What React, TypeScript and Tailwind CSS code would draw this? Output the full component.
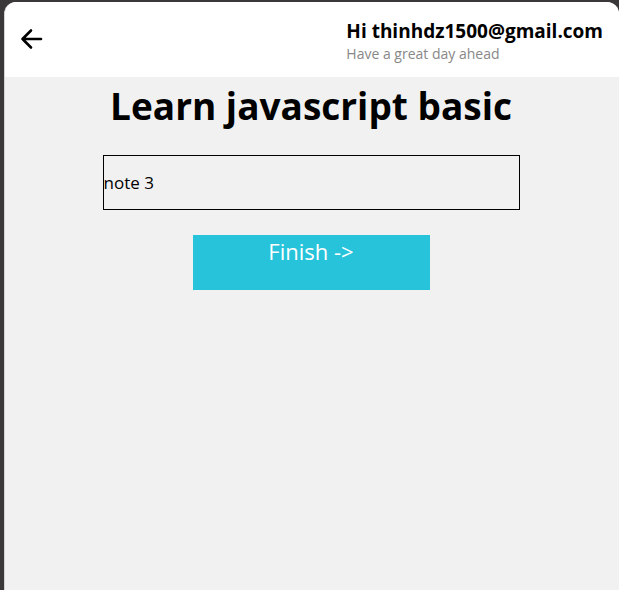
export default function App() {
  return (
    <div className="min-h-screen bg-[#3a3838] pt-0.5 pl-1 font-['Open_Sans','Noto_Sans',sans-serif] text-black">
      <div className="min-h-[588px] overflow-hidden rounded-t-xl border-l border-[#d4d4d4] bg-[#f1f1f1]">
        <header className="flex h-[75px] items-center justify-between bg-white pr-4 pl-3">
          <button type="button" aria-label="Back" className="flex h-8 items-center justify-center">
            <svg viewBox="0 0 30 30" className="size-[30px]" fill="none" stroke="currentColor" strokeWidth="2.6" strokeLinecap="round" strokeLinejoin="round">
              <path d="M24 14H5.500M14 5.500 5.500 14 14 22.500" />
            </svg>
          </button>
          <div className="pt-1">
            <p className="text-[19px] leading-6 font-bold">Hi thinhdz1500@gmail.com</p>
            <p className="text-sm leading-[22px] text-[#888]">Have a great day ahead</p>
          </div>
        </header>
        <main className="flex flex-col items-center pr-0.5">
          <h1 className="text-[37px] leading-[58px] font-bold">Learn javascript basic</h1>
          <div className="mt-5 flex h-[55px] w-[417px] items-center border border-black text-[17px]">note 3</div>
          <button type="button" className="mt-[25px] flex h-[55px] w-[237px] justify-center bg-[#27c3da] text-[22px] leading-8 text-white">Finish -&gt;</button>
        </main>
      </div>
    </div>
  );
}
